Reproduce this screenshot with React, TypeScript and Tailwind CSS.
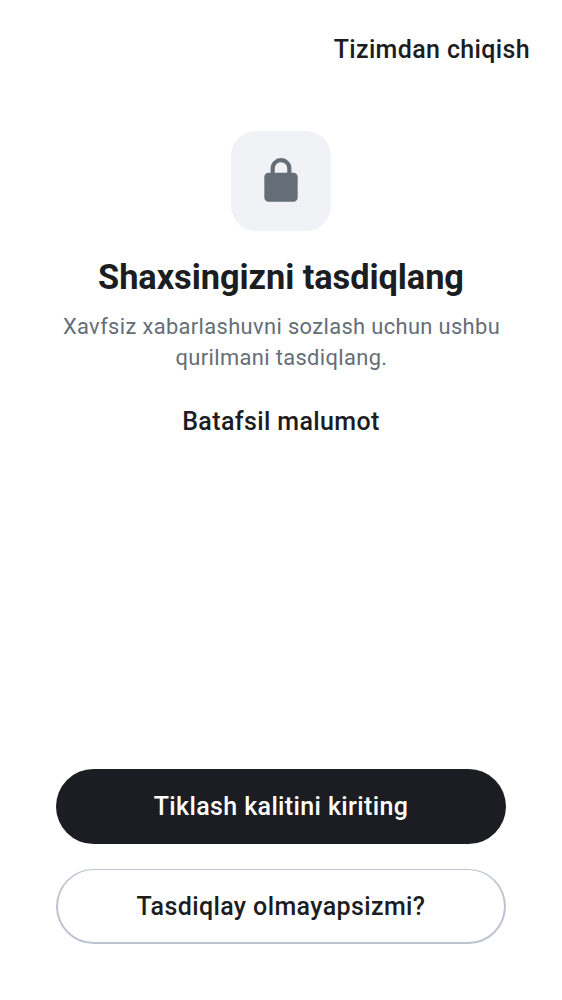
export default function App() {
  return (
    <main className="flex h-[1000px] w-[562px] flex-col items-center bg-white font-['Roboto',sans-serif] text-[#1b1d22]">
      <header className="flex w-full justify-end pt-[31px] pr-[32px]">
        <button className="h-[38px] whitespace-nowrap text-[25px] leading-[38px] font-medium tracking-[0.36px]">Tizimdan chiqish</button>
      </header>
      <div className="mt-[62px] flex size-[100px] items-center justify-center rounded-[25px] bg-[#f0f2f5]">
        <svg viewBox="0 0 24 24" className="size-[50px] fill-[#656d77]" aria-hidden="true">
          <path d="M6 22c-.55 0-1.02-.2-1.41-.59A1.93 1.93 0 0 1 4 20V10c0-.55.2-1.02.59-1.41C4.98 8.2 5.45 8 6 8h1V6c0-1.38.49-2.56 1.46-3.54A4.82 4.82 0 0 1 12 1c1.38 0 2.56.49 3.54 1.46A4.82 4.82 0 0 1 17 6v2h1c.55 0 1.02.2 1.41.59.39.39.59.86.59 1.41v10c0 .55-.2 1.02-.59 1.41-.39.39-.86.59-1.41.59H6ZM9 8h6V6c0-.83-.29-1.54-.88-2.13A2.9 2.9 0 0 0 12 3c-.83 0-1.54.29-2.12.87A2.9 2.9 0 0 0 9 6v2Z" />
        </svg>
      </div>
      <h1 className="mt-[24px] text-[34.375px] leading-[44px] font-bold tracking-[-0.06px] whitespace-nowrap">Shaxsingizni tasdiqlang</h1>
      <p className="mt-[12px] pl-px text-center text-[21.875px] leading-[31px] tracking-[0.37px] whitespace-nowrap text-[#656d77]">Xavfsiz xabarlashuvni sozlash uchun ushbu<br />qurilmani tasdiqlang.</p>
      <button className="mt-[30px] h-[38px] text-[25px] leading-[38px] font-medium tracking-[0.38px] whitespace-nowrap">Batafsil malumot</button>
      <footer className="mt-auto mb-[56px] flex w-[450px] flex-col gap-[25px]">
        <button className="h-[75px] rounded-full bg-[#1b1d22] text-[25px] font-medium tracking-[0.37px] text-white">Tiklash kalitini kiriting</button>
        <button className="h-[75px] rounded-full border-x-2 border-t border-b-2 border-[#bdc3cf] pt-px text-[25px] font-medium tracking-[0.38px]">Tasdiqlay olmayapsizmi?</button>
      </footer>
    </main>
  )
}
